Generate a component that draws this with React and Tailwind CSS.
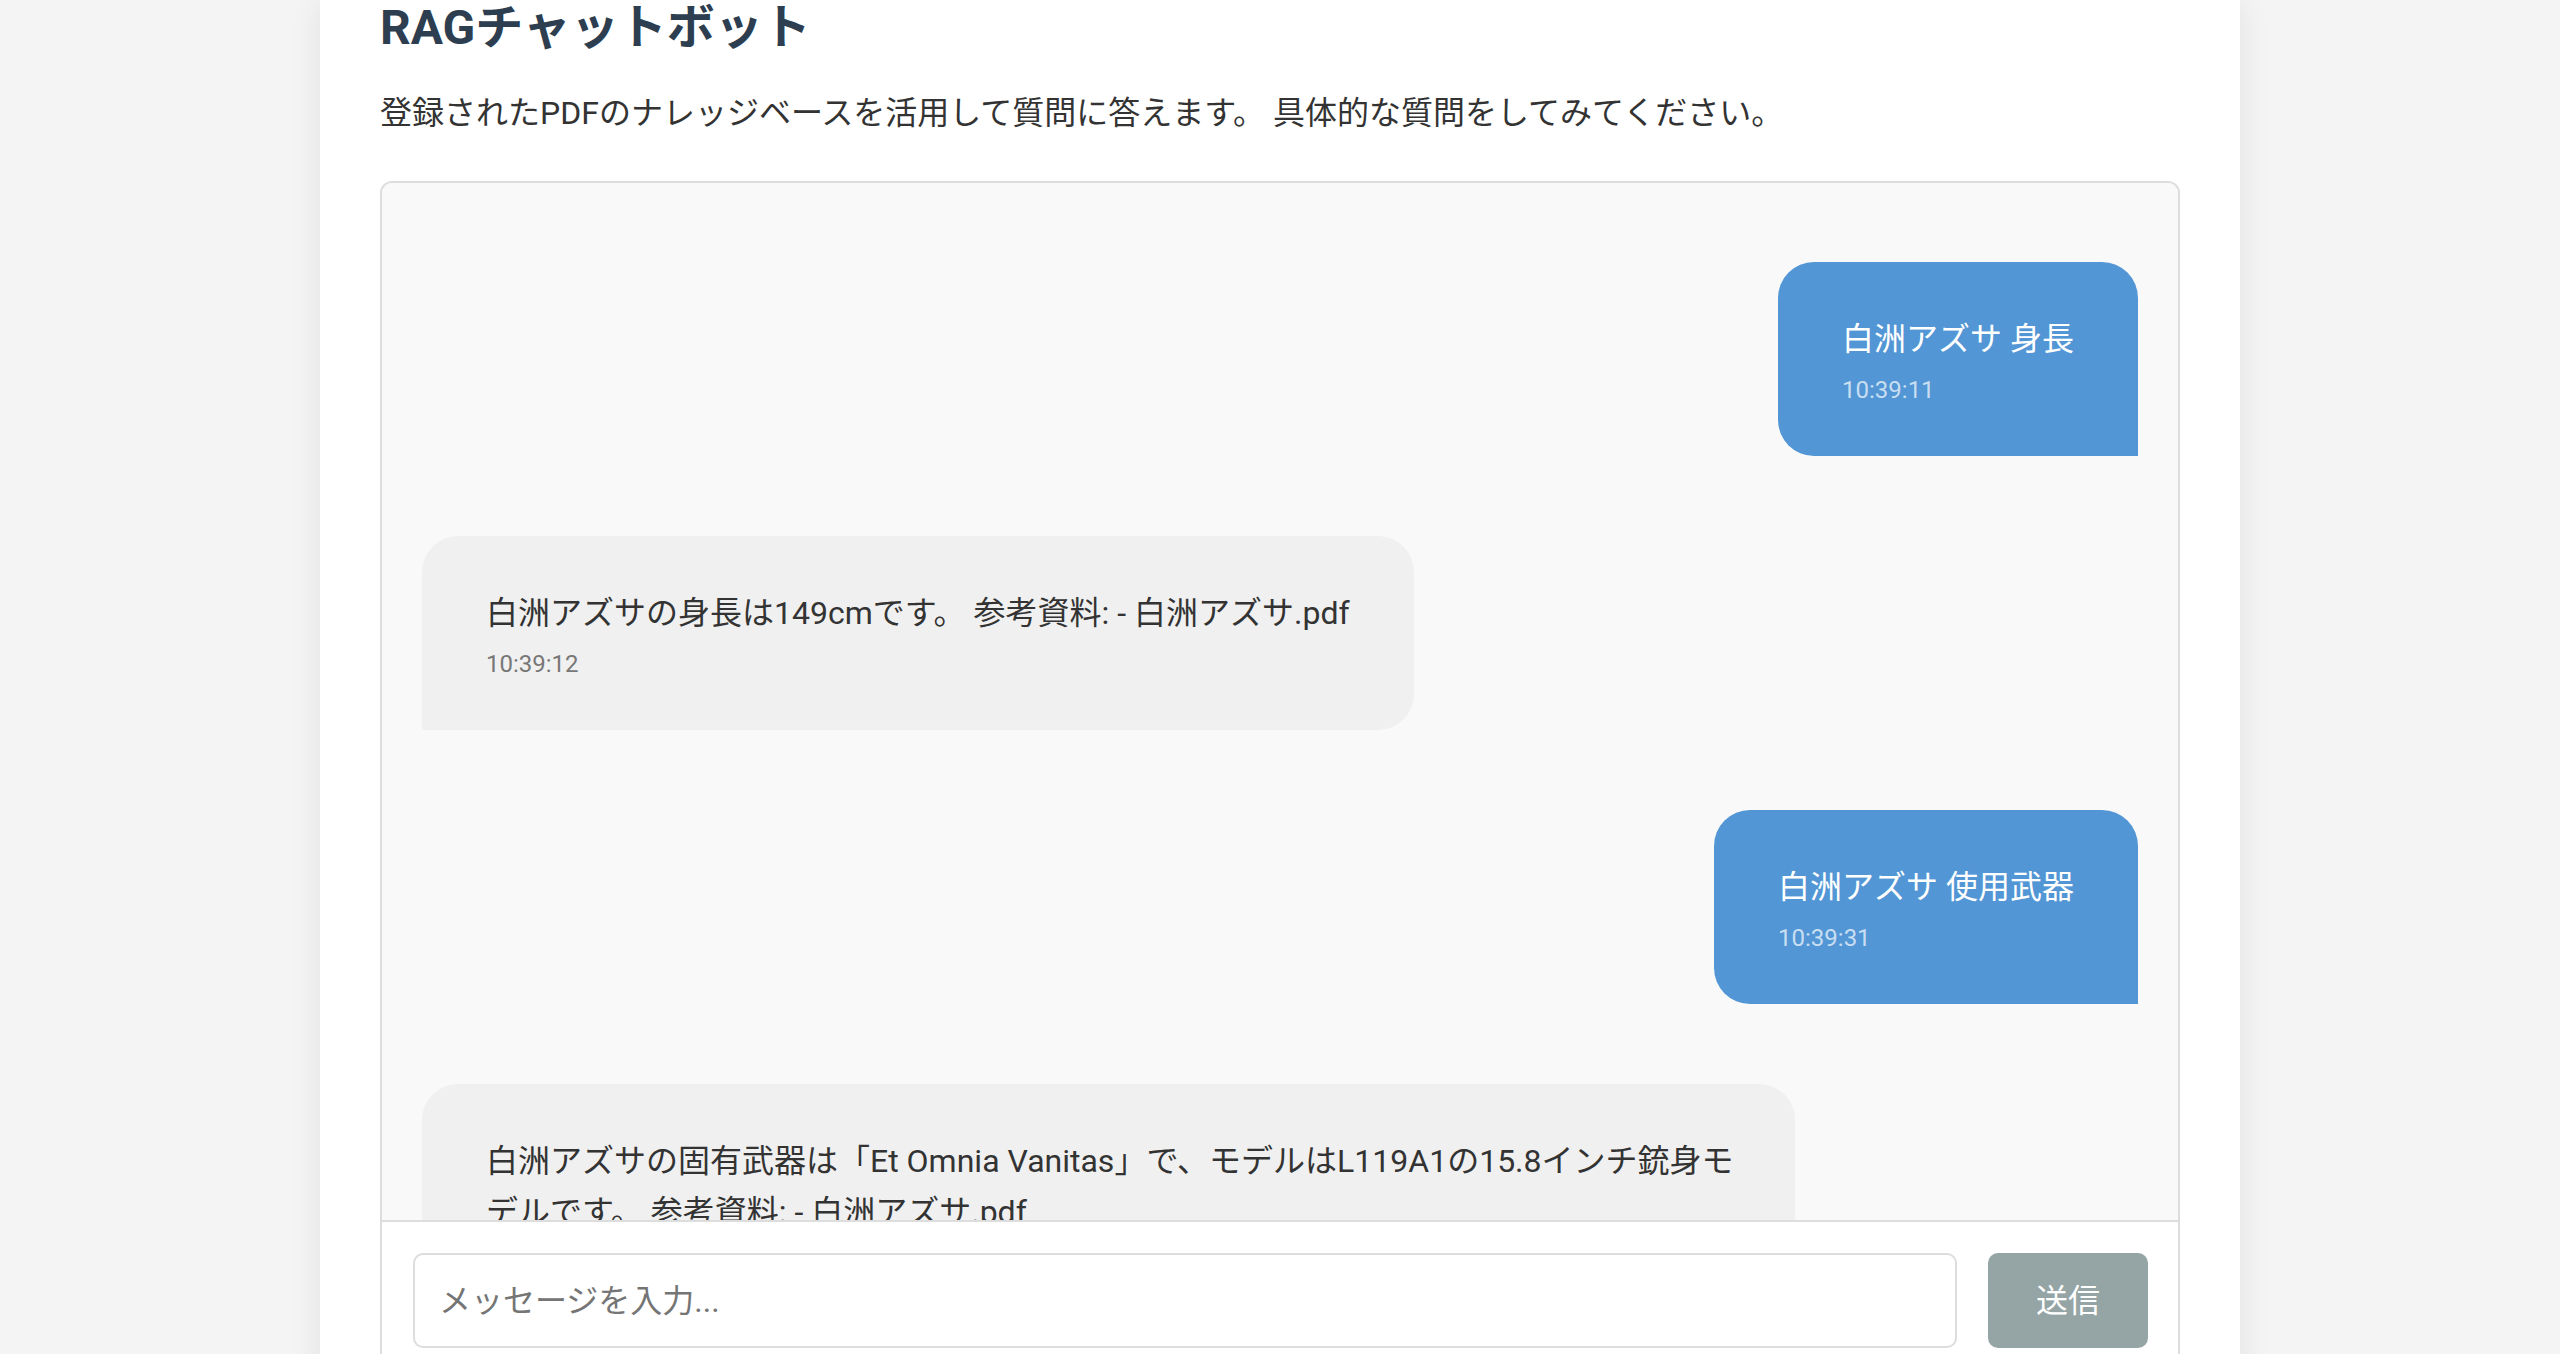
const FONT = "font-['Roboto','Noto_Sans_CJK_JP',sans-serif]"

const MESSAGES = [
  { id: 1, role: 'user', lines: ['白洲アズサ 身長'], time: '10:39:11' },
  { id: 2, role: 'bot', lines: ['白洲アズサの身長は149cmです。 参考資料: - 白洲アズサ.pdf'], time: '10:39:12' },
  { id: 3, role: 'user', lines: ['白洲アズサ 使用武器'], time: '10:39:31' },
  {
    id: 4,
    role: 'bot',
    // wrapped the same way as the original layout
    lines: ['白洲アズサの固有武器は「Et Omnia Vanitas」で、モデルはL119A1の15.8インチ銃身モ', 'デルです。 参考資料: - 白洲アズサ.pdf'],
    time: '10:39:45',
  },
]

function Bubble({ msg }) {
  const isUser = msg.role === 'user'
  return (
    <div
      className={
        isUser
          ? 'self-end max-w-[80%] rounded-[36px] rounded-br-none bg-[#5296d5] px-[64px] pt-[52px] pb-[48px] text-white shrink-0'
          : 'self-start max-w-[80%] rounded-[36px] rounded-bl-none bg-[#f0f0f0] px-[64px] pt-[52px] pb-[48px] text-[#333333] shrink-0'
      }
    >
      <p className="text-[32px] leading-[51px]">
        {msg.lines.map((l, i) => (
          <span key={i} className="block whitespace-nowrap">{l}</span>
        ))}
      </p>
      <p className={'mt-[7px] text-[24px] leading-[36px] ' + (isUser ? 'text-white/70' : 'text-[#777777]')}>
        {msg.time}
      </p>
    </div>
  )
}

export default function App() {
  return (
    <div className={'h-screen overflow-hidden bg-[#f4f4f4] ' + FONT}>
      <div className="mx-auto w-[1920px] min-h-full bg-white px-[60px] shadow-[0_0_30px_rgba(0,0,0,0.08)]">
        <h1 className="text-[48px] leading-[56px] font-bold text-[#2c3e50]">RAGチャットボット</h1>
        <p className="mt-[32px] text-[32px] leading-[51px] text-[#333333]">
          登録されたPDFのナレッジベースを活用して質問に答えます。 具体的な質問をしてみてください。
        </p>

        <div className="mt-[42px] overflow-hidden rounded-[12px] border-2 border-[#dddddd]">
          {/* messages */}
          <div className="flex h-[1037px] flex-col gap-[80px] overflow-hidden bg-[#f9f9f9] px-[40px] pt-[79px]">
            {MESSAGES.map(m => <Bubble key={m.id} msg={m} />)}
          </div>

          {/* input row */}
          <div className="flex items-center gap-[31px] border-t-2 border-[#dddddd] bg-white pt-[31px] pb-[30px] pl-[31px] pr-[30px]">
            <input
              type="text"
              placeholder="メッセージを入力..."
              className="h-[95px] flex-1 rounded-[10px] border-2 border-[#dddddd] px-[24px] text-[32px] text-[#333333] outline-none placeholder:text-[#757575]"
            />
            <button className="h-[95px] w-[160px] rounded-[10px] bg-[#95a5a6] text-[32px] text-white">
              送信
            </button>
          </div>
        </div>
      </div>
    </div>
  )
}
